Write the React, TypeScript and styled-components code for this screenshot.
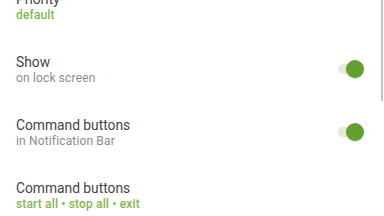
import React from "react";
import styled, { createGlobalStyle } from "styled-components";

const Global = createGlobalStyle`
  html, body { margin: 0; padding: 0; background: #ffffff; }
  body { width: 384px; height: 216px; overflow: hidden; font-family: Roboto, "Noto Sans", sans-serif; }
`;

const Screen = styled.div`
  position: relative;
  width: 384px;
  height: 216px;
  overflow: hidden;
  background: #ffffff;
`;

const List = styled.div`
  display: flex;
  flex-direction: column;
  margin-top: -27px;
`;

const Row = styled.div`
  display: flex;
  align-items: center;
  height: 63px;
  box-sizing: border-box;
  padding: 16px 20px 14px 16px;
`;

const Texts = styled.div`
  flex: 1;
  display: flex;
  flex-direction: column;
`;

const Title = styled.div`
  font-size: 13.8px;
  line-height: 20px;
  color: #444444;
  font-weight: 400;
`;

const Subtitle = styled.div<{ $accent?: boolean }>`
  font-size: 12px;
  line-height: 15px;
  margin-top: -1px;
  color: ${(p) => (p.$accent ? "#80b84a" : "#8c8c8c")};
  font-weight: ${(p) => (p.$accent ? 500 : 400)};
  letter-spacing: 0.15px;
`;

const Switch = styled.div`
  position: relative;
  width: 26px;
  height: 18px;
  display: flex;
  align-items: center;
`;

const Track = styled.div`
  width: 24px;
  height: 10px;
  border-radius: 5px;
  background: #e0ecd6;
`;

const Thumb = styled.div`
  position: absolute;
  right: 0;
  top: 0;
  width: 18px;
  height: 18px;
  border-radius: 50%;
  background: #62a032;
  box-shadow: 0 1px 1.5px rgba(0, 0, 0, 0.15);
`;

const ScrollBar = styled.div`
  position: absolute;
  right: 1px;
  top: 0;
  width: 2px;
  height: 101px;
  background: #c2c2c2;
`;

const Toggle = () => (
  <Switch>
    <Track />
    <Thumb />
  </Switch>
);

export default function App() {
  return (
    <Screen>
      <Global />
      <List>
        <Row>
          <Texts>
            <Title>Priority</Title>
            <Subtitle $accent>default</Subtitle>
          </Texts>
        </Row>
        <Row>
          <Texts>
            <Title>Show</Title>
            <Subtitle>on lock screen</Subtitle>
          </Texts>
          <Toggle />
        </Row>
        <Row>
          <Texts>
            <Title>Command buttons</Title>
            <Subtitle>in Notification Bar</Subtitle>
          </Texts>
          <Toggle />
        </Row>
        <Row>
          <Texts>
            <Title>Command buttons</Title>
            <Subtitle $accent>start all • stop all • exit</Subtitle>
          </Texts>
        </Row>
      </List>
      <ScrollBar />
    </Screen>
  );
}
